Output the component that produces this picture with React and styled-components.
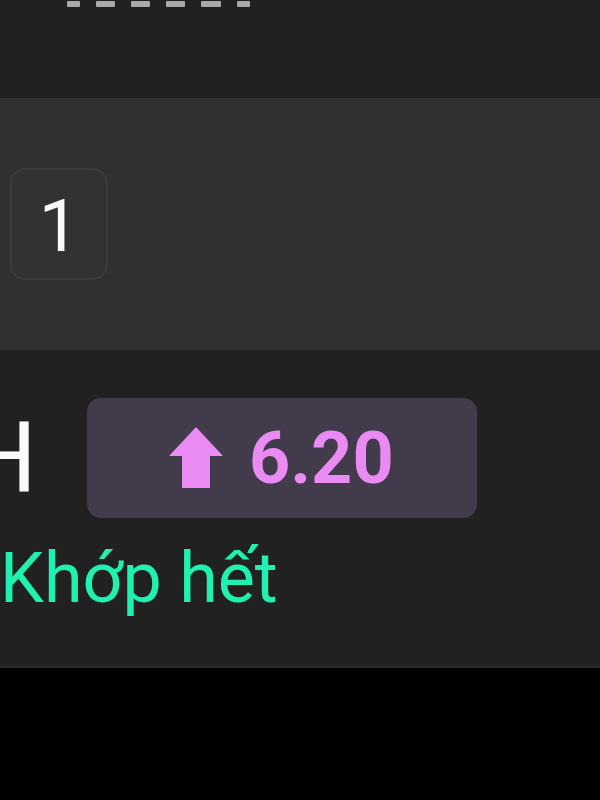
import React from 'react'
import styled, { createGlobalStyle } from 'styled-components'

const Global = createGlobalStyle`
  html, body { margin: 0; padding: 0; background: #000; }
  body { font-family: Roboto, "Noto Sans", sans-serif; }
`

const Screen = styled.div`
  width: 600px;
  height: 800px;
  overflow: hidden;
  background: #000;
  display: flex;
  flex-direction: column;
`

const Header = styled.div`
  height: 98px;
  background: #202020;
  padding-left: 67px;
  display: flex;
  align-items: flex-start;
  gap: 16px;
`

const Dash = styled.span`
  display: block;
  margin-top: 1px;
  width: ${p => p.w}px;
  height: 6px;
  border-radius: 1px;
  background: #a9a9a9;
`

const QtyRow = styled.div`
  height: 252px;
  background: #303030;
  display: flex;
  align-items: center;
  padding-left: 10px;
  box-sizing: border-box;
`

const QtyBox = styled.div`
  width: 98px;
  height: 112px;
  box-sizing: border-box;
  border: 2px solid #3b3b3b;
  border-radius: 15px;
  background: #323232;
  display: flex;
  align-items: center;
  justify-content: center;
  padding-top: 6px;
  color: #fafafa;
  font-size: 72px;
  line-height: 1;
`

const Detail = styled.div`
  height: 318px;
  background: #212121;
  border-bottom: 2px solid #2a2a2a;
  box-sizing: border-box;
  padding-top: 48px;
  display: flex;
  flex-direction: column;
`

const TopLine = styled.div`
  display: flex;
  align-items: center;
  gap: 50px;
`

const Side = styled.span`
  margin-left: -33px;
  color: #fafafa;
  font-size: 98px;
  line-height: 1;
`

const Price = styled.div`
  width: 390px;
  height: 120px;
  border-radius: 14px;
  background: #413b4b;
  display: flex;
  align-items: center;
  gap: 26px;
  padding-left: 82px;
  box-sizing: border-box;
  color: #e98bf2;
  font-size: 72px;
  font-weight: 700;
`

const Status = styled.div`
  margin-top: 22px;
  color: #1ff2b0;
  font-size: 70px;
  line-height: 1.1;
`

const ArrowUp = () => (
  <svg width="54" height="62" viewBox="0 0 54 62">
    <path d="M27 0 L54 29 H41 V61 H13 V29 H0 Z" fill="#e98bf2" />
  </svg>
)

export default function App() {
  return (
    <>
      <Global />
      <Screen>
        <Header>
          {[13, 19, 19, 19, 20, 13].map((w, i) => <Dash key={i} w={w} />)}
        </Header>
        <QtyRow>
          <QtyBox>1</QtyBox>
        </QtyRow>
        <Detail>
          <TopLine>
            <Side>H</Side>
            <Price>
              <ArrowUp />
              <span>6.20</span>
            </Price>
          </TopLine>
          <Status>Khớp hết</Status>
        </Detail>
      </Screen>
    </>
  )
}
